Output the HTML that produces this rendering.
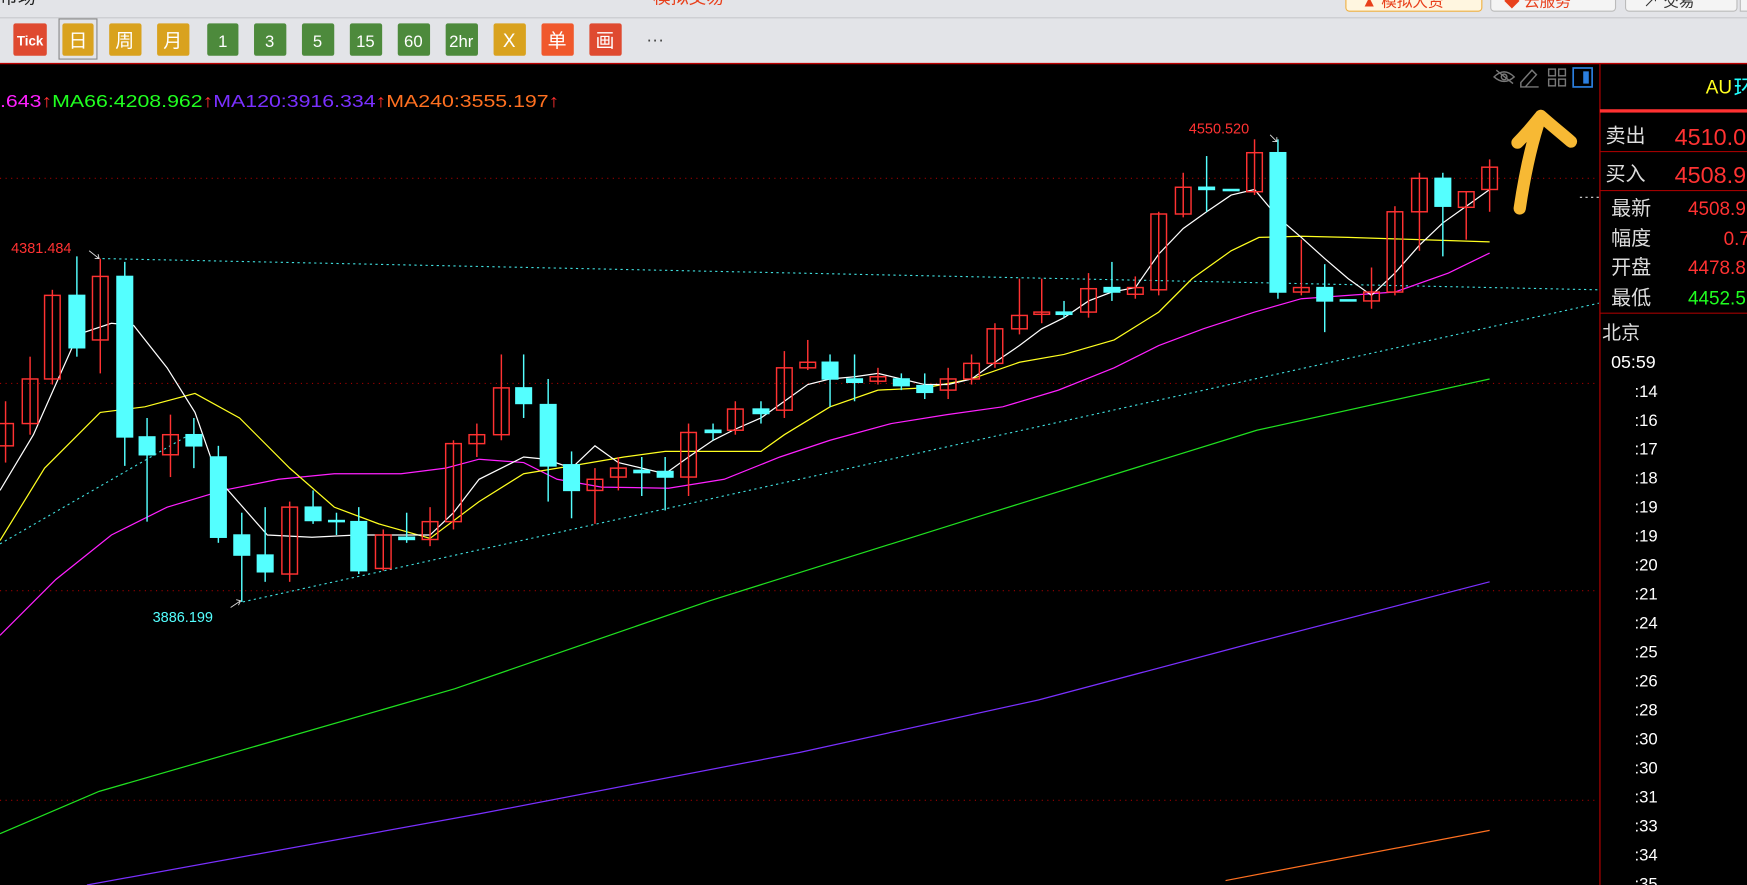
<!DOCTYPE html>
<html><head><meta charset="utf-8"><style>
html,body{margin:0;padding:0;background:#000;overflow:hidden}
svg{display:block}
text{font-family:"Liberation Sans","Noto Sans CJK SC",sans-serif}
</style></head><body>
<svg width="1747" height="885" viewBox="0 0 1568 794" preserveAspectRatio="none" xmlns="http://www.w3.org/2000/svg">
<rect x="0" y="0" width="1568" height="57" fill="#e3e4e8"/>
<line x1="0" y1="16" x2="1568" y2="16" stroke="#c8c8cc" stroke-width="1"/>
<text x="0" y="3" font-size="16" fill="#222">市场</text>
<text x="586" y="3" font-size="16" fill="#e8401c">模拟交易</text>
<rect x="1208" y="-6" width="122" height="16" rx="3" fill="#fff6e0" stroke="#f0b040"/>
<text x="1222" y="6" font-size="14" fill="#e8401c">▲ 模拟大资</text>
<rect x="1338" y="-6" width="112" height="16" rx="3" fill="#f4f4f4" stroke="#bbb"/>
<text x="1350" y="6" font-size="14" fill="#e8401c">◆ 云服务</text>
<rect x="1459" y="-6" width="100" height="16" rx="3" fill="#f4f4f4" stroke="#bbb"/>
<text x="1475" y="6" font-size="14" fill="#333">↗ 交易</text>
<rect x="1562" y="-6" width="10" height="16" fill="#f4f4f4" stroke="#bbb"/>
<!-- toolbar -->
<rect x="53" y="17" width="34" height="36" fill="none" stroke="#888"/>
<g font-size="15" fill="#fff" text-anchor="middle">
<rect x="12" y="21" width="30" height="29" rx="2" fill="#df4a30"/><text x="27" y="41" font-size="12" font-weight="bold">Tick</text>
<rect x="56" y="21" width="28" height="29" rx="2" fill="#d9a21e"/><text x="70" y="42" font-size="17">日</text>
<rect x="98" y="21" width="29" height="29" rx="2" fill="#d9a21e"/><text x="112" y="42" font-size="17">周</text>
<rect x="141" y="21" width="29" height="29" rx="2" fill="#d9a21e"/><text x="155" y="42" font-size="17">月</text>
<rect x="186" y="21" width="28" height="29" rx="2" fill="#4d8a3c"/><text x="200" y="42">1</text>
<rect x="228" y="21" width="29" height="29" rx="2" fill="#4d8a3c"/><text x="242" y="42">3</text>
<rect x="271" y="21" width="29" height="29" rx="2" fill="#4d8a3c"/><text x="285" y="42">5</text>
<rect x="314" y="21" width="29" height="29" rx="2" fill="#4d8a3c"/><text x="328" y="42">15</text>
<rect x="357" y="21" width="29" height="29" rx="2" fill="#4d8a3c"/><text x="371" y="42">60</text>
<rect x="400" y="21" width="29" height="29" rx="2" fill="#4d8a3c"/><text x="414" y="42">2hr</text>
<rect x="443" y="21" width="29" height="29" rx="2" fill="#d9a21e"/><text x="457" y="42" font-size="17">X</text>
<rect x="486" y="21" width="29" height="29" rx="2" fill="#f0582c"/><text x="500" y="42" font-size="17">单</text>
<rect x="529" y="21" width="29" height="29" rx="2" fill="#df4a30"/><text x="543" y="42" font-size="17">画</text>
<text x="588" y="41" fill="#444" font-size="16">···</text>
</g>
<rect x="0" y="57" width="1568" height="737" fill="#000"/>
<line x1="0" y1="57" x2="1568" y2="57" stroke="#b00" stroke-width="1.2"/>
<!-- legend -->
<text x="0" y="96" font-size="16" textLength="502" lengthAdjust="spacingAndGlyphs"><tspan fill="#ff20ff">.643</tspan><tspan fill="#ff3030">↑</tspan><tspan fill="#20ff20">MA66:4208.962</tspan><tspan fill="#ff3030">↑</tspan><tspan fill="#7a30ff">MA120:3916.334</tspan><tspan fill="#ff3030">↑</tspan><tspan fill="#ff7020">MA240:3555.197</tspan><tspan fill="#ff3030">↑</tspan></text>
<!-- grid -->
<g stroke="#a00000" stroke-dasharray="1,4" stroke-width="1">
<line x1="0" y1="160" x2="1435" y2="160"/><line x1="0" y1="344" x2="1435" y2="344"/><line x1="0" y1="530" x2="1435" y2="530"/><line x1="0" y1="718" x2="1435" y2="718"/>
</g>
<g stroke="#40e0e0" stroke-dasharray="2,3" fill="none" stroke-width="1">
<line x1="92" y1="232" x2="1435" y2="260"/>
<line x1="218" y1="540" x2="1435" y2="272"/>
<line x1="0" y1="488" x2="170" y2="390"/>
<line x1="1418" y1="177" x2="1435" y2="177" stroke="#ddd"/>
</g>
<!-- MAs -->
<g fill="none" stroke-width="1.1">
<polyline stroke="#ff7020" points="1100,790 1337,745"/>
<polyline stroke="#7a30ff" points="78,794 431,730 718,675 932,628 1128,576 1337,522"/>
<polyline stroke="#20e020" points="0,748 89,710 408,618 637,539 886,461 1128,386 1337,340"/>
<polyline stroke="#ff20ff" points="0,570 50,520 100,480 150,455 200,440 250,430 300,425 360,425 400,420 430,412 470,415 500,430 540,437 600,438 650,430 700,410 745,395 800,380 850,372 900,365 950,350 1000,330 1040,310 1080,295 1126,280 1168,268 1210,265 1252,262 1300,245 1337,227"/>
<polyline stroke="#ffff20" points="0,485 40,420 90,370 130,365 175,353 215,375 260,420 300,455 340,470 386,483 430,450 470,425 513,418 560,410 597,405 640,405 683,405 704,390 745,365 788,350 830,348 872,340 915,325 955,318 1000,305 1040,280 1070,250 1105,225 1130,213 1168,212 1210,213 1274,215 1337,217"/>
<polyline stroke="#fff" points="0,440 30,390 70,300 100,290 120,292 150,330 175,370 196,430 240,480 280,482 320,480 360,480 386,480 407,460 430,430 470,410 490,412 513,420 534,400 555,415 576,420 597,425 618,410 640,395 660,385 683,375 704,360 725,345 745,340 767,338 788,335 809,340 830,345 851,345 872,340 893,325 915,310 935,295 955,285 977,270 998,262 1019,258 1040,228 1062,205 1083,190 1105,175 1126,170 1147,195 1168,213 1189,232 1210,250 1231,265 1252,245 1274,220 1295,200 1316,185 1337,170"/>
</g>
<!-- red candles -->
<g stroke="#ff3232" fill="none" stroke-width="1.3">
<line x1="5" y1="360" x2="5" y2="415"/><rect x="-2" y="380" width="14" height="20"/>
<line x1="27" y1="320" x2="27" y2="390"/><rect x="20" y="340" width="14" height="40"/>
<line x1="47" y1="260" x2="47" y2="345"/><rect x="40" y="265" width="14" height="75"/>
<line x1="90" y1="232" x2="90" y2="335"/><rect x="83" y="248" width="14" height="57"/>
<line x1="153" y1="372" x2="153" y2="428"/><rect x="146" y="390" width="14" height="18"/>
<line x1="260" y1="450" x2="260" y2="522"/><rect x="253" y="455" width="14" height="60"/>
<line x1="344" y1="475" x2="344" y2="512"/><rect x="337" y="480" width="14" height="30"/>
<line x1="386" y1="455" x2="386" y2="490"/><rect x="379" y="468" width="14" height="16"/>
<line x1="407" y1="395" x2="407" y2="475"/><rect x="400" y="398" width="14" height="70"/>
<line x1="428" y1="380" x2="428" y2="410"/><rect x="421" y="390" width="14" height="8"/>
<line x1="450" y1="318" x2="450" y2="395"/><rect x="443" y="348" width="14" height="42"/>
<line x1="534" y1="420" x2="534" y2="470"/><rect x="527" y="430" width="14" height="10"/>
<line x1="555" y1="410" x2="555" y2="440"/><rect x="548" y="420" width="14" height="8"/>
<line x1="618" y1="380" x2="618" y2="445"/><rect x="611" y="388" width="14" height="40"/>
<line x1="660" y1="360" x2="660" y2="390"/><rect x="653" y="367" width="14" height="19"/>
<line x1="704" y1="315" x2="704" y2="375"/><rect x="697" y="330" width="14" height="38"/>
<line x1="725" y1="305" x2="725" y2="332"/><rect x="718" y="325" width="14" height="5"/>
<line x1="788" y1="330" x2="788" y2="345"/><rect x="781" y="338" width="14" height="4"/>
<line x1="851" y1="330" x2="851" y2="358"/><rect x="844" y="340" width="14" height="10"/>
<line x1="872" y1="318" x2="872" y2="345"/><rect x="865" y="326" width="14" height="14"/>
<line x1="893" y1="290" x2="893" y2="330"/><rect x="886" y="295" width="14" height="31"/>
<line x1="915" y1="250" x2="915" y2="300"/><rect x="908" y="283" width="14" height="12"/>
<line x1="935" y1="250" x2="935" y2="290"/><rect x="928" y="280" width="14" height="2"/>
<line x1="977" y1="245" x2="977" y2="285"/><rect x="970" y="259" width="14" height="21"/>
<line x1="1019" y1="248" x2="1019" y2="268"/><rect x="1012" y="258" width="14" height="6"/>
<line x1="1040" y1="190" x2="1040" y2="265"/><rect x="1033" y="192" width="14" height="68"/>
<line x1="1062" y1="155" x2="1062" y2="195"/><rect x="1055" y="168" width="14" height="24"/>
<line x1="1126" y1="125" x2="1126" y2="175"/><rect x="1119" y="137" width="14" height="35"/>
<line x1="1168" y1="215" x2="1168" y2="265"/><rect x="1161" y="258" width="14" height="4"/>
<line x1="1231" y1="240" x2="1231" y2="277"/><rect x="1224" y="262" width="14" height="8"/>
<line x1="1252" y1="185" x2="1252" y2="265"/><rect x="1245" y="190" width="14" height="72"/>
<line x1="1274" y1="155" x2="1274" y2="225"/><rect x="1267" y="160" width="14" height="30"/>
<line x1="1316" y1="172" x2="1316" y2="215"/><rect x="1309" y="172" width="14" height="14"/>
<line x1="1337" y1="143" x2="1337" y2="190"/><rect x="1330" y="150" width="14" height="20"/>
</g>
<!-- cyan candles -->
<g stroke="#54ffff" fill="#54ffff" stroke-width="1.3">
<line x1="69" y1="230" x2="69" y2="320"/><rect x="62" y="265" width="14" height="47"/>
<line x1="112" y1="235" x2="112" y2="418"/><rect x="105" y="248" width="14" height="144"/>
<line x1="132" y1="375" x2="132" y2="468"/><rect x="125" y="392" width="14" height="16"/>
<line x1="174" y1="375" x2="174" y2="420"/><rect x="167" y="390" width="14" height="10"/>
<line x1="196" y1="400" x2="196" y2="487"/><rect x="189" y="410" width="14" height="72"/>
<line x1="217" y1="460" x2="217" y2="540"/><rect x="210" y="480" width="14" height="18"/>
<line x1="238" y1="455" x2="238" y2="522"/><rect x="231" y="498" width="14" height="15"/>
<line x1="281" y1="440" x2="281" y2="470"/><rect x="274" y="455" width="14" height="12"/>
<line x1="302" y1="460" x2="302" y2="480"/><rect x="295" y="467" width="14" height="1"/>
<line x1="322" y1="455" x2="322" y2="515"/><rect x="315" y="468" width="14" height="44"/>
<line x1="365" y1="460" x2="365" y2="487"/><rect x="358" y="482" width="14" height="2"/>
<line x1="470" y1="318" x2="470" y2="375"/><rect x="463" y="348" width="14" height="14"/>
<line x1="492" y1="340" x2="492" y2="450"/><rect x="485" y="363" width="14" height="55"/>
<line x1="513" y1="405" x2="513" y2="465"/><rect x="506" y="417" width="14" height="23"/>
<line x1="576" y1="410" x2="576" y2="445"/><rect x="569" y="422" width="14" height="2"/>
<line x1="597" y1="410" x2="597" y2="458"/><rect x="590" y="423" width="14" height="5"/>
<line x1="640" y1="380" x2="640" y2="395"/><rect x="633" y="386" width="14" height="2"/>
<line x1="683" y1="360" x2="683" y2="380"/><rect x="676" y="367" width="14" height="4"/>
<line x1="745" y1="318" x2="745" y2="365"/><rect x="738" y="325" width="14" height="15"/>
<line x1="767" y1="318" x2="767" y2="360"/><rect x="760" y="340" width="14" height="3"/>
<line x1="809" y1="335" x2="809" y2="350"/><rect x="802" y="340" width="14" height="6"/>
<line x1="830" y1="335" x2="830" y2="358"/><rect x="823" y="346" width="14" height="6"/>
<line x1="955" y1="270" x2="955" y2="285"/><rect x="948" y="280" width="14" height="2"/>
<line x1="998" y1="235" x2="998" y2="270"/><rect x="991" y="258" width="14" height="4"/>
<line x1="1083" y1="140" x2="1083" y2="190"/><rect x="1076" y="168" width="14" height="2"/>
<rect x="1098" y="170" width="14" height="1"/>
<line x1="1147" y1="125" x2="1147" y2="268"/><rect x="1140" y="137" width="14" height="125"/>
<line x1="1189" y1="237" x2="1189" y2="298"/><rect x="1182" y="258" width="14" height="12"/>
<rect x="1203" y="269" width="14" height="1"/>
<line x1="1295" y1="155" x2="1295" y2="230"/><rect x="1288" y="160" width="14" height="25"/>
</g>
<!-- labels -->
<text x="10" y="227" font-size="13" fill="#ff3232">4381.484</text>
<text x="1067" y="120" font-size="13" fill="#ff3232">4550.520</text>
<text x="137" y="558" font-size="13" fill="#54ffff">3886.199</text>
<g stroke="#ddd" fill="none" stroke-width="0.8"><path d="M80,225 L89,232 M85,232 L89,232 L88,228"/><path d="M1140,121 L1146,127 M1142,127 L1146,127 L1146,123"/><path d="M207,545 L216,539 M212,538 L216,539 L214,543"/></g>
<!-- top-right chart icons -->
<g stroke="#777" fill="none" stroke-width="1.3">
<path d="M1341,69 Q1350,60 1359,69 Q1350,77 1341,69 Z"/><circle cx="1350" cy="69" r="2.5"/><line x1="1343" y1="63" x2="1358" y2="75"/>
<path d="M1365,78 L1365,74 L1375,63 L1379,67 L1369,78 Z M1365,78 L1381,78"/>
<rect x="1390" y="62" width="6" height="6"/><rect x="1399" y="62" width="6" height="6"/><rect x="1390" y="71" width="6" height="6"/><rect x="1399" y="71" width="6" height="6"/>
</g>
<rect x="1412" y="61" width="17" height="17" fill="none" stroke="#2b7fe0" stroke-width="1.5"/><rect x="1421" y="64" width="5" height="11" fill="#2b7fe0"/>
<!-- yellow arrow -->
<path d="M1364,187 C1368,160 1374,130 1383,104 M1362,128 C1372,118 1378,110 1383,104 C1392,112 1402,120 1410,127" stroke="#f7b934" stroke-width="11" stroke-linecap="round" stroke-linejoin="round" fill="none"/>
<!-- right panel -->
<line x1="1436" y1="57" x2="1436" y2="794" stroke="#a00000" stroke-width="1.2"/>
<text x="1531" y="84" font-size="17" fill="#ffff20" font-family="Liberation Serif">AU</text>
<text x="1556" y="86" font-size="20" fill="#20ffff">环</text>
<rect x="1436" y="98" width="132" height="3" fill="#ff3232"/>
<g stroke="#a00000" stroke-width="1"><line x1="1436" y1="136" x2="1568" y2="136"/><line x1="1436" y1="171" x2="1568" y2="171"/><line x1="1436" y1="281" x2="1568" y2="281"/></g>
<g font-size="18" fill="#ddd"><text x="1441" y="128">卖出</text><text x="1441" y="162">买入</text></g>
<g font-size="21" fill="#ff3232"><text x="1503" y="130">4510.0</text><text x="1503" y="164">4508.9</text></g>
<g font-size="18" fill="#ddd"><text x="1446" y="193">最新</text><text x="1446" y="220">幅度</text><text x="1446" y="246">开盘</text><text x="1446" y="273">最低</text></g>
<g font-size="17" fill="#ff3232"><text x="1515" y="193">4508.9</text><text x="1547" y="220">0.7</text><text x="1515" y="246">4478.8</text></g>
<text x="1515" y="273" font-size="17" fill="#20ff20">4452.5</text>
<text x="1438" y="304" font-size="17" fill="#ddd">北京</text>
<text x="1446" y="330" font-size="16" fill="#fff">05:59</text>
<g font-size="15" fill="#fff">
<text x="1467" y="356">:14</text><text x="1467" y="382">:16</text><text x="1467" y="408">:17</text><text x="1467" y="434">:18</text><text x="1467" y="460">:19</text><text x="1467" y="486">:19</text><text x="1467" y="512">:20</text><text x="1467" y="538">:21</text><text x="1467" y="564">:24</text><text x="1467" y="590">:25</text><text x="1467" y="616">:26</text><text x="1467" y="642">:28</text><text x="1467" y="668">:30</text><text x="1467" y="694">:30</text><text x="1467" y="720">:31</text><text x="1467" y="746">:33</text><text x="1467" y="772">:34</text><text x="1467" y="798">:35</text>
</g>
</svg>
</body></html>
